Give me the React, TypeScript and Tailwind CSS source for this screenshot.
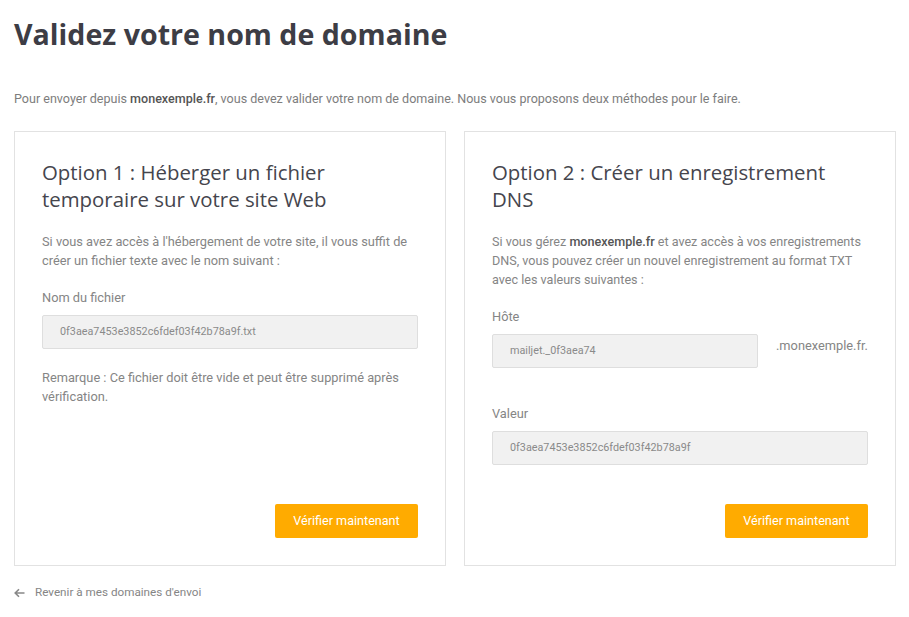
import React from "react";

function Field({ value, className = "" }: { value: string; className?: string }) {
  return (
    <div
      className={`h-[34px] flex items-center px-[17px] bg-[#f1f1f1] border border-[#dedede] rounded-[2px] text-[10.8px] text-[#8a8a8a] ${className}`}
    >
      {value}
    </div>
  );
}

function Button() {
  return (
    <div className="mt-auto flex justify-end">
      <button className="h-[34px] w-[143px] bg-[#ffab00] text-white text-[12.6px] rounded-[2px]">
        Vérifier maintenant
      </button>
    </div>
  );
}

export default function App() {
  return (
    <div className="w-[909px] h-[617px] bg-white px-[14px] font-['Roboto',sans-serif] text-[#808080]">
      <h1 className="pt-[14px] font-['Open_Sans',sans-serif] font-bold text-[28.6px] leading-[40px] text-[#3d3d45]">
        Validez votre nom de domaine
      </h1>
      <p className="mt-[35px] text-[12.55px] leading-[19px] text-[#7d7d7d]">
        Pour envoyer depuis <span className="font-medium text-[#555]">monexemple.fr</span>, vous devez valider votre nom de domaine. Nous vous proposons deux méthodes pour le faire.
      </p>
      <div className="mt-[23px] grid grid-cols-[432px_432px] gap-[18px]">
        <div className="h-[435px] border border-[#e2e2e2] px-[27px] pt-[27px] pb-[27px] flex flex-col">
          <h2 className="max-w-[345px] font-['Open_Sans',sans-serif] font-medium text-[20.4px] leading-[27px] text-[#45454d]">
            Option 1 : Héberger un fichier temporaire sur votre site Web
          </h2>
          <p className="mt-[19px] text-[12.8px] leading-[19px] text-[#858585]">
            Si vous avez accès à l'hébergement de votre site, il vous suffit de créer un fichier texte avec le nom suivant :
          </p>
          <div className="mt-[18px] text-[12.8px] leading-[19px] text-[#858585]">Nom du fichier</div>
          <Field value="0f3aea7453e3852c6fdef03f42b78a9f.txt" className="mt-[8px]" />
          <p className="mt-[19px] text-[12.8px] leading-[19px] text-[#858585]">
            Remarque : Ce fichier doit être vide et peut être supprimé après vérification.
          </p>
          <Button />
        </div>
        <div className="h-[435px] border border-[#e2e2e2] px-[27px] pt-[27px] pb-[27px] flex flex-col">
          <h2 className="max-w-[345px] font-['Open_Sans',sans-serif] font-medium text-[20.4px] leading-[27px] text-[#45454d]">
            Option 2 : Créer un enregistrement DNS
          </h2>
          <p className="mt-[19px] text-[12.6px] leading-[19px] text-[#858585]">
            Si vous gérez <span className="font-medium text-[#555]">monexemple.fr</span> et avez accès à vos enregistrements DNS, vous pouvez créer un nouvel enregistrement au format TXT avec les valeurs suivantes :
          </p>
          <div className="mt-[18px] text-[12.8px] leading-[19px] text-[#858585]">Hôte</div>
          <div className="mt-[8px] flex items-start">
            <Field value="mailjet._0f3aea74" className="w-[266px]" />
            <span className="ml-[18px] mt-[2px] text-[12.8px] leading-[19px] text-[#858585]">.monexemple.fr.</span>
          </div>
          <div className="mt-[36px] text-[12.8px] leading-[19px] text-[#858585]">Valeur</div>
          <Field value="0f3aea7453e3852c6fdef03f42b78a9f" className="mt-[8px]" />
          <Button />
        </div>
      </div>
      <div className="mt-[17px] flex items-center text-[11.7px] leading-[19px] text-[#858585]">
        <svg width="11" height="10" viewBox="0 0 11 10" className="mr-[10px]">
          <path d="M10.5 5H1.5M5 1.2L1.2 5L5 8.8" stroke="#888" strokeWidth="1.6" fill="none" />
        </svg>
        Revenir à mes domaines d'envoi
      </div>
    </div>
  );
}
